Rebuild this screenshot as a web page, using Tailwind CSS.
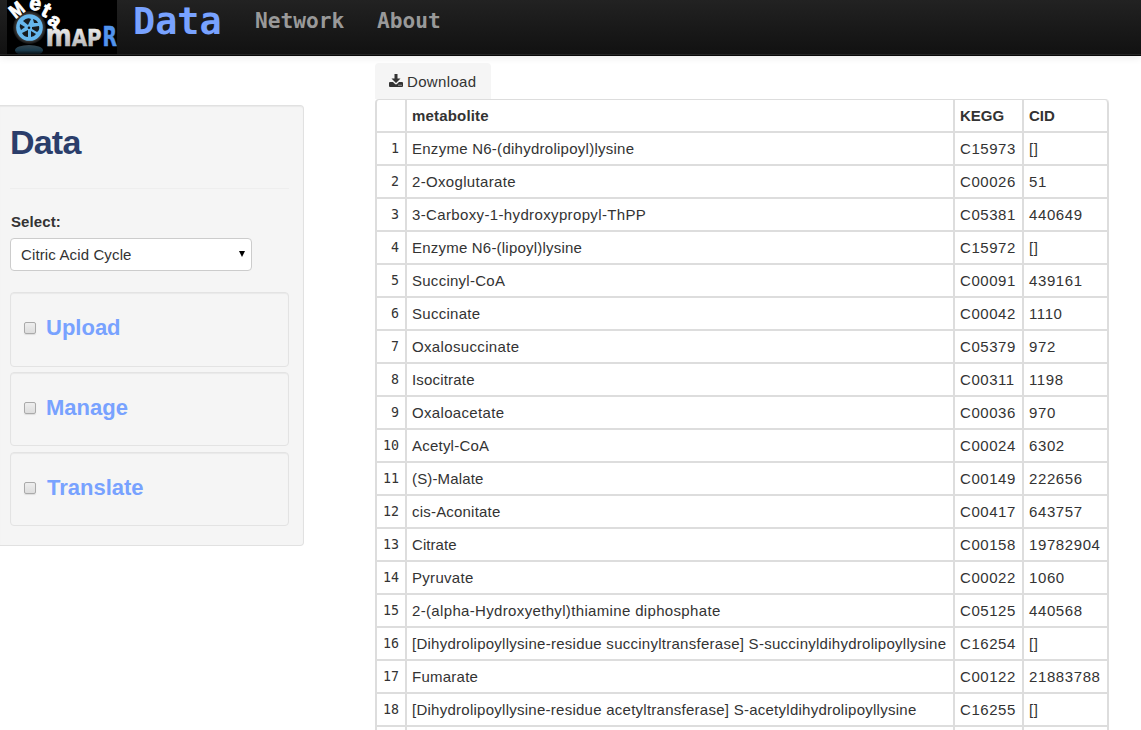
<!DOCTYPE html>
<html lang="en">
<head>
<meta charset="utf-8">
<title>MetaMapR</title>
<script src="https://cdn.jsdelivr.net/npm/@tailwindcss/browser@4"></script>
</head>
<body class="h-[730px] overflow-hidden bg-white font-['Liberation_Sans',Arial,sans-serif] text-[15px] leading-5 text-[#333]">
<header class="flex h-14 items-start border-b border-[#080808] bg-linear-to-b from-[#222] to-[#111] pl-[7px] font-['DejaVu_Sans_Mono',monospace] font-bold text-[#999] shadow-[0_1px_8px_rgba(0,0,0,0.1),inset_0_-1px_0_#252525]">
  <svg class="h-[54px] w-[110px] shrink-0" viewBox="7 0 110 54" role="img" aria-label="MetaMapR">
    <defs>
      <radialGradient id="rim"><stop offset=".7" stop-color="#555"/><stop offset="1" stop-color="#111"/></radialGradient>
      <linearGradient id="silver" gradientUnits="userSpaceOnUse" x1="0" x2="0" y1="28" y2="46"><stop offset="0" stop-color="#eee"/><stop offset="1" stop-color="#b8b8b8"/></linearGradient>
      <linearGradient id="mirror" x2="0" y2="1"><stop offset="0" stop-color="#4c6573" stop-opacity=".7"/><stop offset=".5" stop-color="#24526b" stop-opacity=".7"/><stop offset="1" stop-color="#10222d" stop-opacity=".2"/></linearGradient>
    </defs>
    <rect x="7" width="110" height="54" fill="#000"/>
    <ellipse cx="29" cy="50.500" rx="14" ry="5.500" fill="url(#mirror)"/>
    <circle cx="29.500" cy="27.500" r="16.500" fill="url(#rim)"/>
    <circle cx="29.500" cy="27.500" r="13.300" fill="#66b7ed"/>
    <g fill="#171c20">
      <path d="M23 21q4-4 8-2l-3 6z"/><path d="M20 24l5 3-4 3q-2-3-1-6z"/><path d="M22 33l6-3v7q-4 0-6-4z"/><path d="M31 31l5 3q-2 3-5 3z"/><path d="M32 27l7-1q1 4-2 6l-5-3z"/><path d="M33 19q4 1 5 4h-4z"/>
      <circle cx="29" cy="27.700" r="1.300"/>
    </g>
    <g fill="#fff" stroke="#fff" stroke-width=".9" font-family="Liberation Sans" font-weight="bold">
      <text transform="translate(15.500 19) rotate(-39)" font-size="19" textLength="13.500" lengthAdjust="spacingAndGlyphs">M</text>
      <text transform="translate(28.500 9) rotate(10)" font-size="21">e</text>
      <text transform="translate(40 14.500) rotate(28)" font-size="21">t</text>
      <text transform="translate(46.500 22.500) rotate(38)" font-size="20">a</text>
    </g>
    <g font-family="DejaVu Sans" font-weight="bold">
      <text x="45.500" y="45.500" font-size="23.500" textLength="56" lengthAdjust="spacingAndGlyphs" fill="url(#silver)" stroke="url(#silver)" stroke-width=".5"><tspan font-size="30">m</tspan>AP</text>
      <text x="102.500" y="46" font-size="26.500" textLength="14.500" lengthAdjust="spacingAndGlyphs" fill="#5294ed" stroke="#5294ed" stroke-width=".5">R</text>
    </g>
  </svg>
  <nav class="flex pl-4">
    <a class="w-[122px] text-[36.800px] leading-[44px] text-[#78a2ff]">Data</a>
    <a class="w-[122px] text-[21.200px] leading-[42px]">Network</a>
    <a class="text-[21.200px] leading-[42px]">About</a>
  </nav>
</header>
<div class="flex items-start">
  <aside class="mt-[49px] h-[441px] w-[304px] shrink-0 rounded-r border border-l-0 border-[#e1e1e1] bg-[#f5f5f5] pl-[10px] shadow-[inset_0_1px_1px_rgba(0,0,0,0.05)]">
    <h1 class="pt-4 text-[34px] leading-10 font-bold tracking-[-0.8px] text-[#2b3e6b]">Data</h1>
    <hr class="mt-[26px] w-[279px] border-[#eee]">
    <label class="mt-[23px] block pl-px font-bold tracking-[0.1px]">Select:</label>
    <div class="mt-[6px] flex h-[33px] w-[242px] items-center rounded border border-[#ccc] bg-white pl-[10px]">
      <span class="tracking-[0.130px]">Citric Acid Cycle</span>
      <svg class="mt-[-2px] mr-[6px] ml-auto h-[6px] w-[6px]" viewBox="0 0 6 6"><path d="M0 0h6L3 6z" fill="#000"/></svg>
    </div>
    <div class="mt-[21px] flex w-[279px] flex-col gap-[6px] text-[22px] font-bold text-[#78a2ff]">
      <div class="flex h-[75px] items-start rounded border border-[#e3e3e3] pt-[23px] pl-[13px] leading-6 shadow-[inset_0_1px_1px_rgba(0,0,0,0.05)]"><i class="mt-[6px] mr-[10px] size-3 rounded-xs border border-[#aaa] bg-linear-to-b from-[#eee] to-[#ddd] shadow-[0_1px_1px_#ddd]"></i><span>Upload</span></div>
      <div class="-mt-px flex h-[74px] items-start rounded border border-[#e3e3e3] pt-[23px] pl-[13px] leading-6 shadow-[inset_0_1px_1px_rgba(0,0,0,0.05)]"><i class="mt-[6px] mr-[10px] size-3 rounded-xs border border-[#aaa] bg-linear-to-b from-[#eee] to-[#ddd] shadow-[0_1px_1px_#ddd]"></i><span>Manage</span></div>
      <div class="flex h-[74px] items-start rounded border border-[#e3e3e3] pt-[23px] pl-[13px] leading-6 shadow-[inset_0_1px_1px_rgba(0,0,0,0.05)]"><i class="mt-[6px] mr-[11px] size-3 rounded-xs border border-[#aaa] bg-linear-to-b from-[#eee] to-[#ddd] shadow-[0_1px_1px_#ddd]"></i><span>Translate</span></div>
    </div>
  </aside>
  <main class="ml-[71px] w-[734px] pt-[7px]">
    <button class="flex h-9 w-[116px] items-center gap-1 rounded-t bg-[#f5f5f5] pl-[14px]">
      <svg class="mt-[-2px] h-[13px] w-[14px]" viewBox="0 0 14 13" fill="#333"><path d="M5.500 0h3v4.500h3L7 9 2.500 4.500h3z"/><path fill-rule="evenodd" d="M1 8h3l2 2q1 .8 2 0l2-2h3q1 0 1 1v3q0 1-1 1H1q-1 0-1-1V9q0-1 1-1zm8.500 2.700v1h1v-1zm2 0v1h1v-1z"/></svg>
      <span class="pt-px tracking-[0.350px]">Download</span>
    </button>
    <div class="rounded-t border-t border-l-2 border-[#ddd]" id="table">
      <div class="grid h-[33px] grid-cols-[30px_548px_69px_85px] font-bold leading-[31px] *:border-r-2 *:border-b-2 *:border-[#ddd] *:pl-[5px]">
        <b></b><b class="tracking-[0.180px]">metabolite</b><b>KEGG</b><b class="rounded-tr">CID</b>
      </div>
    </div>
  </main>
</div>
<script>
// name, KEGG id, CID, letter spacing of the name in px
const rows = [
  ["Enzyme N6-(dihydrolipoyl)lysine","C15973","[]",.26],
  ["2-Oxoglutarate","C00026","51",.33],
  ["3-Carboxy-1-hydroxypropyl-ThPP","C05381","440649",.36],
  ["Enzyme N6-(lipoyl)lysine","C15972","[]",.21],
  ["Succinyl-CoA","C00091","439161",.26],
  ["Succinate","C00042","1110",.28],
  ["Oxalosuccinate","C05379","972",.35],
  ["Isocitrate","C00311","1198",.18],
  ["Oxaloacetate","C00036","970",.33],
  ["Acetyl-CoA","C00024","6302",.22],
  ["(S)-Malate","C00149","222656",.15],
  ["cis-Aconitate","C00417","643757",.2],
  ["Citrate","C00158","19782904",.05],
  ["Pyruvate","C00022","1060",.3],
  ["2-(alpha-Hydroxyethyl)thiamine diphosphate","C05125","440568",.34],
  ["[Dihydrolipoyllysine-residue succinyltransferase] S-succinyldihydrolipoyllysine","C16254","[]",.263],
  ["Fumarate","C00122","21883788",.25],
  ["[Dihydrolipoyllysine-residue acetyltransferase] S-acetyldihydrolipoyllysine","C16255","[]",.257],
  ["","","",0]
];
document.getElementById("table").insertAdjacentHTML("beforeend", rows.map((r, i) => `
  <div class="grid h-[33px] grid-cols-[30px_548px_69px_85px] leading-[31px] whitespace-nowrap *:border-r-2 *:border-b-2 *:border-[#ddd] *:pl-[5px]">
    <div class="pr-[6px] text-right font-['DejaVu_Sans_Mono',monospace] text-[13.300px]">${r[0] ? i + 1 : ""}</div>
    <div style="letter-spacing:${r[3]}px">${r[0]}</div>
    <div class="tracking-[0.550px]">${r[1]}</div>
    <div class="tracking-[0.600px]">${r[2]}</div>
  </div>`).join(""));
</script>
</body>
</html>
